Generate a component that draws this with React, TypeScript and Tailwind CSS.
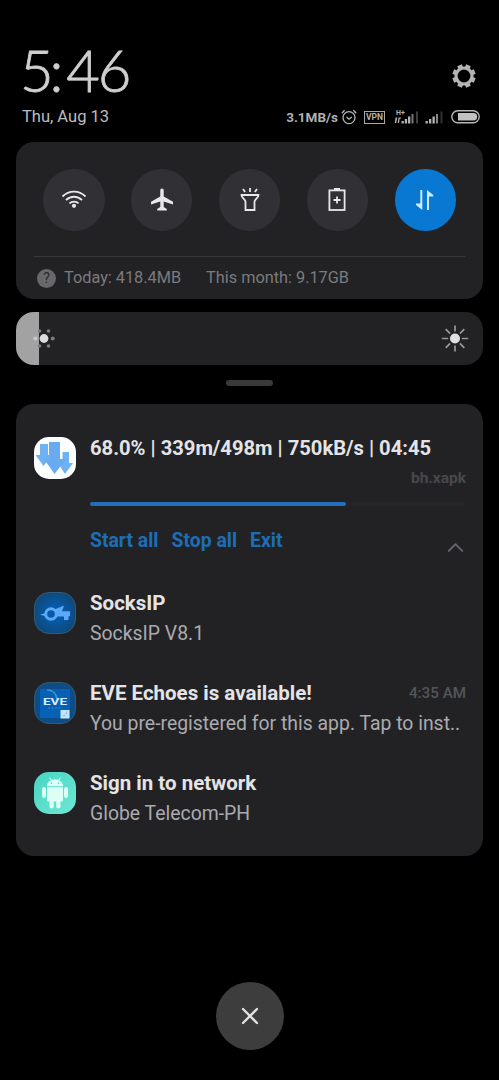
import React from 'react';
import { ChevronUp, X } from 'lucide-react';

const WifiIcon = () => (
  <svg width="26" height="20" viewBox="0 0 26 20" fill="none" stroke="#e8e8ea" strokeWidth="1.9">
    <path d="M1.5 6.5C8 0 18 0 24.5 6.5" />
    <path d="M5 10.2C9.6 5.6 16.4 5.6 21 10.2" />
    <path d="M8.4 13.4C11 11 15 11 17.6 13.4" />
    <circle cx="13" cy="15.8" r="2.1" fill="#e8e8ea" stroke="none" />
  </svg>
);

const PlaneIcon = () => (
  <svg width="24" height="24" viewBox="0 0 24 24" fill="#e8e8ea">
    <path d="M12 .4c1.100 0 1.700.9 1.700 2v6l9.300 5.300v2.700l-9.300-3v5.700l3.100 2v1.500H7.200v-1.500l3.100-2v-5.700L1 16.400v-2.700l9.300-5.300V2.400c0-1.100.6-2 1.700-2z" />
  </svg>
);

const TorchIcon = () => (
  <svg width="22" height="24" viewBox="0 0 22 24" fill="none" stroke="#e8e8ea" strokeWidth="1.8">
    <path d="M2.500 7h17c0 3.500-4 4.200-4 6.700V22h-9v-8.300c0-2.500-4-3.200-4-6.700z" />
    <path d="M4 1l2.100 3.100M11 0v4M18 1l-2.100 3.100" />
  </svg>
);

const BatterySaverIcon = () => (
  <svg width="18" height="24" viewBox="0 0 18 24" fill="none" stroke="#e8e8ea" strokeWidth="1.8">
    <rect x="1.4" y="2.4" width="15.2" height="19.6" />
    <path d="M6 1h6M9 8.500v7M5.500 12h7" />
  </svg>
);

const DataIcon = () => (
  <svg width="20" height="22" viewBox="0 0 20 22" fill="#c9eaff">
    <path d="M5.300 1h2v20L1 16v-1.500h4.300z" />
    <path d="M12 21h2V7.500h4.300V6L12 1z" />
  </svg>
);

const GearIcon = () => (
  <svg width="24" height="24" viewBox="0 0 24 24" fill="none" stroke="#b4b4b4">
    <circle cx="12" cy="12" r="8" strokeWidth="3.2" />
    <g strokeWidth="5">
      <path d="M12 .4v3M12 20.600v3" transform="rotate(22.5 12 12)" />
      <path d="M12 .4v3M12 20.600v3" transform="rotate(67.5 12 12)" />
      <path d="M12 .4v3M12 20.600v3" transform="rotate(112.5 12 12)" />
      <path d="M12 .4v3M12 20.600v3" transform="rotate(157.5 12 12)" />
    </g>
  </svg>
);

const AlarmIcon = () => (
  <svg width="16" height="16" viewBox="0 0 16 16" fill="none" stroke="#b8b8b8" strokeWidth="1.3">
    <circle cx="8" cy="8.6" r="6" />
    <path d="M5.500 8l2.500 2.200L10.800 8M.8 4.200l2.800-2.900M15.200 4.200l-2.800-2.900" />
  </svg>
);

const MobileSignal = () => (
  <svg width="26" height="16" viewBox="0 0 26 16" fill="#b4b4b4">
    <text x="2" y="5.5" fontSize="7" fontWeight="700" fontFamily="Roboto, sans-serif">H+</text>
    <path d="M1.500 8.500h1.700l-1 5.500H.8zM4.500 8.500h2.300v1.300H5.600L5 14H3.700z" />
    <rect x="7.5" y="12" width="2.3" height="2.5" />
    <rect x="10.8" y="10" width="2.3" height="4.5" />
    <rect x="14" y="7.5" width="2.3" height="7" />
    <rect x="17.5" y="5" width="2" height="9.5" fill="#777" />
    <rect x="22" y="2.5" width="2" height="12" fill="#3d3d3d" />
  </svg>
);

const SimSignal = () => (
  <svg width="19" height="16" viewBox="0 0 19 16" fill="#b4b4b4">
    <rect x=".5" y="12" width="2.3" height="2.5" />
    <rect x="4" y="10" width="2.3" height="4.5" />
    <rect x="7.5" y="7.5" width="2.3" height="7" />
    <rect x="11" y="5" width="2" height="9.5" fill="#888" />
    <rect x="15.5" y="2.5" width="2" height="12" fill="#303030" />
  </svg>
);

const BatteryIcon = () => (
  <svg width="29" height="14" viewBox="0 0 29 14" fill="none">
    <rect x=".8" y=".8" width="27.4" height="12" rx="6" stroke="#b8b8b8" strokeWidth="1.4" />
    <path d="M7 3.100h15.500a3.700 3.700 0 010 7.400H7z" fill="#c2c2c2" />
  </svg>
);

const DimSunIcon = () => (
  <svg width="24" height="24" viewBox="0 0 24 24" fill="#7b7b7e">
    <circle cx="12" cy="11.5" r="4.4" fill="#dcdcde" />
    <circle cx="3.3" cy="11.5" r="2" fill="#c8c8c8" />
    <circle cx="20.7" cy="11.5" r="2" />
    <circle cx="7.5" cy="4" r="1.8" />
    <circle cx="16.5" cy="4" r="1.8" />
    <circle cx="7.5" cy="19" r="1.8" />
    <circle cx="16.5" cy="19" r="1.8" />
  </svg>
);

const BrightSunIcon = () => (
  <svg width="28" height="28" viewBox="0 0 28 28" fill="none" stroke="#98989a" strokeWidth="1.7">
    <circle cx="14" cy="13.5" r="5" fill="#dfdfe0" stroke="none" />
    <path d="M14 .5v6M14 20.500v6M.8 13.500h6.400M20.800 13.500h6.400M4.700 4.200l4.400 4.400M18.900 18.400l4.400 4.400M4.700 22.800l4.400-4.400M18.900 8.600l4.400-4.400" />
  </svg>
);

const DownloadIcon = () => (
  <svg width="42" height="42" viewBox="0 0 42 42">
    <rect width="42" height="42" rx="15" fill="#fdfeff" />
    <g fill="#6fb2f4">
      <path d="M6 7h8v11h4L9.500 29 1.500 18H6z" />
      <path d="M28.500 15h6.500v11h4L31 37l-7-11h4.500z" />
      <path d="M15 5h11v17h6L20.500 37 10 22h5z" fill="#68abf0" />
    </g>
  </svg>
);

const SocksIcon = () => (
  <svg width="42" height="42" viewBox="0 0 42 42">
    <defs>
      <radialGradient id="socks">
        <stop offset="0.4" stopColor="#0759a6" />
        <stop offset="1" stopColor="#0f4a7c" />
      </radialGradient>
    </defs>
    <rect x=".5" y=".5" width="41" height="41" rx="14.5" fill="url(#socks)" stroke="#315b74" />
    <circle cx="17" cy="22" r="5.3" fill="none" stroke="#5ba9fa" strokeWidth="3" />
    <path d="M6 22.700l6-1.900v3.400zM20.500 17.500L30 13.500l-2 5.700h8v5h-1.500V28H30v-3.500h-7.500z" fill="#5ba9fa" />
  </svg>
);

const EveIcon = () => (
  <svg width="42" height="42" viewBox="0 0 42 42">
    <rect x=".5" y=".5" width="41" height="41" rx="14.5" fill="#0d4c86" stroke="#315b74" />
    <rect x="6" y="7" width="30" height="29" fill="#0660b4" />
    <path d="M13 8c5 0 9 3 10 9" fill="none" stroke="#3f94d6" strokeWidth="1.5" />
    <text x="9" y="23" fontSize="8.5" fontWeight="700" fontFamily="Roboto, sans-serif" textLength="24" lengthAdjust="spacingAndGlyphs" fill="#d9efff">EVE</text>
    <path d="M14 26h14" stroke="#3c89c8" strokeWidth="1" strokeDasharray="2 1.5" />
    <rect x="26.5" y="28" width="9" height="8.5" fill="#c4e4fa" />
    <path d="M29 33.500h2.500M32.500 29.500v3" stroke="#8dc4ea" strokeWidth="1.3" />
  </svg>
);

const AndroidIcon = () => (
  <svg width="42" height="42" viewBox="0 0 42 42">
    <defs>
      <linearGradient id="android" x1="0" y1="0" x2="1" y2="1">
        <stop offset="0" stopColor="#45d5c3" />
        <stop offset="1" stopColor="#70e8d2" />
      </linearGradient>
    </defs>
    <rect width="42" height="42" rx="15" fill="url(#android)" />
    <g fill="#dcfff6">
      <path d="M13 14.200a8 7 0 0116 0z" />
      <path d="M13 15.300h16V28a1.500 1.500 0 01-1.500 1.500h-13A1.500 1.500 0 0113 28z" />
      <rect x="8" y="15" width="4" height="11" rx="2" />
      <rect x="30" y="15" width="4" height="11" rx="2" />
      <rect x="15.5" y="27" width="4.3" height="9.5" rx="2" />
      <rect x="22.2" y="27" width="4.3" height="9.5" rx="2" />
    </g>
    <path d="M15.500 5.500l2 3M26.500 5.500l-2 3" stroke="#dcfff6" />
    <circle cx="17.5" cy="11.3" r=".8" fill="#4fd5c4" />
    <circle cx="24.5" cy="11.3" r=".8" fill="#4fd5c4" />
  </svg>
);

const toggles = [
  { name: 'wifi', icon: <WifiIcon />, active: false },
  { name: 'airplane', icon: <PlaneIcon />, active: false },
  { name: 'torch', icon: <TorchIcon />, active: false },
  { name: 'battery', icon: <BatterySaverIcon />, active: false },
  { name: 'data', icon: <DataIcon />, active: true },
];

const notifications = [
  { title: 'SocksIP', text: 'SocksIP V8.1', time: '', icon: <SocksIcon /> },
  { title: 'EVE Echoes is available!', text: 'You pre-registered for this app. Tap to inst..', time: '4:35 AM', icon: <EveIcon /> },
  { title: 'Sign in to network', text: 'Globe Telecom-PH', time: '', icon: <AndroidIcon /> },
];

const App: React.FC = () => {
  return (
    <div className="flex h-[1080px] w-[499px] flex-col overflow-hidden bg-black px-4 font-[Roboto,sans-serif]">
      <header className="flex h-[142px] flex-col pt-[40px]">
        <div className="flex h-[62px] items-start justify-between pr-[7px] pl-[4px]">
          <div className="font-[Lato,sans-serif] text-[58px] leading-[60px] font-light tracking-[-2.2px] text-[#cfcfcf] [-webkit-text-stroke:0.8px_#cfcfcf]">
            5<span className="mr-[5px] -ml-[2px]">:</span>46
          </div>
          <div className="pt-[24px]"><GearIcon /></div>
        </div>
        <div className="flex h-[30px] items-center justify-between pr-[3px] pl-[6px]">
          <span className="text-[16.5px] text-[#bcbcbc]">Thu, Aug 13</span>
          <div className="flex items-center">
            <span className="text-[13.5px] font-bold text-[#b0b0b0]">3.1MB/s</span>
            <span className="ml-[3px]"><AlarmIcon /></span>
            <span className="ml-[7px] flex h-[13px] w-[21px] items-center justify-center border border-[#a8a8a8] text-[8.5px] font-bold text-[#b0b0b0]">VPN</span>
            <span className="ml-[9px]"><MobileSignal /></span>
            <span className="ml-[5px]"><SimSignal /></span>
            <span className="ml-[7px]"><BatteryIcon /></span>
          </div>
        </div>
      </header>

      <section className="h-[157px] w-[467px] rounded-[18px] bg-[#222225] px-[18px] pt-[27px]">
        <div className="flex justify-between px-[9px]">
          {toggles.map(item => (
            <button
              key={item.name}
              className={`flex h-[61.5px] w-[61.5px] items-center justify-center rounded-full ${item.active ? 'bg-[#0878d3]' : 'bg-[#313135]'}`}
            >
              {item.icon}
            </button>
          ))}
        </div>
        <div className="mt-[25.5px] border-t border-[#39393c]" />
        <div className="flex h-[43px] items-center pl-[3px] text-[16.3px] text-[#7b7b7e]">
          <span className="mr-[8px] flex h-[19px] w-[19px] items-center justify-center rounded-full bg-[#68686a] text-[14px] text-[#29292b]">?</span>
          <span>Today: 418.4MB</span>
          <span className="ml-[25px]">This month: 9.17GB</span>
        </div>
      </section>

      <section className="mt-[13px] flex h-[53px] w-[467px] shrink-0 items-center justify-between overflow-hidden rounded-[18px] bg-linear-to-r from-[#a2a2a2] from-[23px] to-[#222225] to-[23px] pr-[14px] pl-[16px]">
        <DimSunIcon />
        <BrightSunIcon />
      </section>

      <div className="mt-[15px] h-[6px] w-[47px] shrink-0 self-center rounded-full bg-[#39393b]" />

      <section className="mt-[18px] h-[452px] w-[467px] shrink-0 rounded-[18px] bg-[#222225] pt-[31px] pr-[17px] pl-[18.4px]">
        <article className="flex h-[157px]">
          <div className="mt-[2px] w-[55.6px] shrink-0"><DownloadIcon /></div>
          <div className="flex flex-1 flex-col">
            <h2 className="-mt-px text-[20.2px] leading-[28px] font-bold whitespace-nowrap text-[#e4e4e6]">68.0% | 339m/498m | 750kB/s | 04:45</h2>
            <span className="mt-[6px] self-end text-[15.5px] leading-[20px] font-bold text-[#48484b]">bh.xapk</span>
            <div className="mt-[14px] h-[4px] w-full rounded-full bg-[#252528]">
              <div className="h-full w-[68%] rounded-full bg-[#206fbd]" />
            </div>
            <div className="mt-[21px] flex items-start text-[19.4px] leading-[28px] font-bold text-[#1d6eb6]">
              <button>Start all</button>
              <button className="ml-[13px]">Stop all</button>
              <button className="ml-[13px]">Exit</button>
              <ChevronUp className="mt-[7px] -mr-[3px] ml-auto text-[#65656a]" size={27} strokeWidth={1.8} />
            </div>
          </div>
        </article>
        {notifications.map(item => (
          <article key={item.title} className="flex h-[90px]">
            <div className="w-[55.6px] shrink-0">{item.icon}</div>
            <div className="-mt-[3px] min-w-0 flex-1">
              <div className="flex items-center justify-between">
                <h2 className="text-[20.5px] leading-[28px] font-bold text-[#e4e4e6]">{item.title}</h2>
                <span className="text-[15.2px] font-medium text-[#555558]">{item.time}</span>
              </div>
              <p className="mt-[3px] text-[19.4px] leading-[28px] whitespace-nowrap text-[#aaaab0]">{item.text}</p>
            </div>
          </article>
        ))}
      </section>

      <button className="mt-[126px] flex h-[68px] w-[68px] shrink-0 items-center justify-center self-center rounded-full bg-[#3d3d3d] text-[#e2e2e2]">
        <X size={28} strokeWidth={2} />
      </button>
    </div>
  );
};

export default App;
